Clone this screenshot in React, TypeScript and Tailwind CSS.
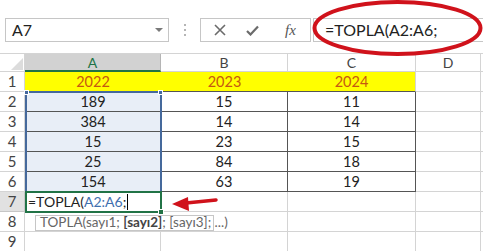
import React from "react";

const W = [25, 136, 127, 128, 65, 2];

function Cell({
  w,
  className = "",
  children,
}: {
  w: number;
  className?: string;
  children?: React.ReactNode;
}) {
  return (
    <div
      className={`h-full flex items-center justify-center shrink-0 ${className}`}
      style={{ width: w }}
    >
      {children}
    </div>
  );
}

const data = [
  ["189", "15", "11"],
  ["384", "14", "14"],
  ["15", "23", "15"],
  ["25", "84", "18"],
  ["154", "63", "19"],
];

export default function App() {
  return (
    <div
      className="relative w-[483px] h-[251px] overflow-hidden bg-white text-[#222]"
      style={{ fontFamily: "Lato, 'Liberation Sans', sans-serif" }}
    >
      {/* formula bar area */}
      <div className="h-[53px] flex items-start pt-[18px]">
        <div className="ml-[5px] w-[164px] h-[24px] border border-[#c6c6c6] flex items-center justify-between pl-[6px] pr-[5px]">
          <span className="text-[16px] text-[#222] leading-none">A7</span>
          <svg width="8" height="5" viewBox="0 0 8 5">
            <path d="M0 0 L8 0 L4 4 Z" fill="#7a7a7a" />
          </svg>
        </div>
        <div className="w-[31px] h-[24px] flex flex-col items-center justify-center gap-[3px]">
          <div className="w-[2px] h-[2px] bg-[#b5b5b5]" />
          <div className="w-[2px] h-[2px] bg-[#b5b5b5]" />
          <div className="w-[2px] h-[2px] bg-[#b5b5b5]" />
        </div>
        <div className="w-[111px] h-[24px] border border-[#c6c6c6] flex items-center">
          <div className="w-[38px] flex justify-center">
            <svg width="12" height="12" viewBox="0 0 12 12">
              <path d="M1 1 L11 11 M11 1 L1 11" stroke="#6b6b6b" strokeWidth="1.6" />
            </svg>
          </div>
          <div className="w-[26px] flex justify-center">
            <svg width="13" height="11" viewBox="0 0 13 11">
              <path d="M1 6 L4.5 9.5 L12 1.5" stroke="#6b6b6b" strokeWidth="2.2" fill="none" />
            </svg>
          </div>
          <div
            className="flex-1 flex justify-center text-[15px] italic text-[#555] pl-[6px]"
            style={{ fontFamily: "'Liberation Serif', serif" }}
          >
            fx
          </div>
        </div>
        <div className="ml-[2px] flex-1 h-[24px] border-y border-l border-[#c6c6c6] flex items-center pl-[11px]">
          <span className="text-[16px] leading-none text-[#222]">=TOPLA(A2:A6;</span>
        </div>
      </div>

      {/* header row */}
      <div className="flex h-[19px] border-t border-[#d4d4d4]">
        <Cell w={W[0]} className="border-r border-b border-[#d4d4d4] relative">
          <svg className="absolute left-[11px] top-[4px]" width="12" height="12" viewBox="0 0 12 12">
            <path d="M12 0 L12 12 L0 12 Z" fill="#dcdcdc" />
          </svg>
        </Cell>
        <Cell w={W[1]} className="bg-[#d2d2d2] border-r border-[#b5b5b5] border-b-2 border-b-[#217346] text-[#217346] text-[14px]">
          A
        </Cell>
        <Cell w={W[2]} className="border-r border-b border-[#d4d4d4] text-[#444] text-[14px]">B</Cell>
        <Cell w={W[3]} className="border-r border-b border-[#d4d4d4] text-[#444] text-[14px]">C</Cell>
        <Cell w={W[4]} className="border-r border-b border-[#d4d4d4] text-[#444] text-[14px]">D</Cell>
        <Cell w={W[5]} className="border-b border-[#d4d4d4]" />
      </div>

      {/* row 1 */}
      <div className="flex h-[20px] text-[14.5px]">
        <Cell w={W[0]} className="border-r border-b border-[#d4d4d4] text-[#444] text-[15px]">1</Cell>
        <Cell w={W[1]} className="bg-[#ffff00] border-b border-[#4d5a3a] text-[#c65911]">2022</Cell>
        <Cell w={W[2]} className="bg-[#ffff00] border-b border-[#555] text-[#c65911]">2023</Cell>
        <Cell w={W[3]} className="bg-[#ffff00] border-r border-r-[#d4d4d4] border-b border-b-[#555] text-[#c65911]">2024</Cell>
        <Cell w={W[4]} className="border-r border-b border-[#d4d4d4]" />
        <Cell w={W[5]} className="border-b border-[#d4d4d4]" />
      </div>

      {/* rows 2-6 */}
      {data.map((r, i) => (
        <div key={i} className="flex h-[20px] text-[14.5px]">
          <Cell w={W[0]} className="border-r border-b border-[#d4d4d4] text-[#444] text-[15px]">{i + 2}</Cell>
          <Cell w={W[1]} className="bg-[#e8eef7] border-b border-[#555]">{r[0]}</Cell>
          <Cell w={W[2]} className="border-r border-b border-[#555]">{r[1]}</Cell>
          <Cell w={W[3]} className="border-r border-b border-[#555]">{r[2]}</Cell>
          <Cell w={W[4]} className="border-r border-b border-[#d4d4d4]" />
          <Cell w={W[5]} className="border-b border-[#d4d4d4]" />
        </div>
      ))}

      {/* row 7 */}
      <div className="flex h-[20px] text-[15px]">
        <Cell w={W[0]} className="bg-[#e1e1e1] border-r border-b border-[#c6c6c6] text-[#444]">7</Cell>
        <Cell w={W[1]} className="justify-start pl-[3px] border-r border-b border-[#d4d4d4]">
          <span className="leading-none text-[14px]">
            =TOPLA(<span className="text-[#3f6fae]">A2:A6</span>;
          </span>
          <span className="inline-block w-[1px] h-[16px] bg-black ml-[1px]" />
        </Cell>
        <Cell w={W[2]} className="border-r border-b border-[#d4d4d4]" />
        <Cell w={W[3]} className="border-r border-b border-[#d4d4d4]" />
        <Cell w={W[4]} className="border-r border-b border-[#d4d4d4]" />
        <Cell w={W[5]} className="border-b border-[#d4d4d4]" />
      </div>

      {/* rows 8-9 */}
      {[8, 9].map((n) => (
        <div key={n} className="flex h-[20px] text-[15px]">
          <Cell w={W[0]} className="border-r border-b border-[#d4d4d4] text-[#444]">{n}</Cell>
          <Cell w={W[1]} className="border-r border-b border-[#d4d4d4]" />
          <Cell w={W[2]} className="border-r border-b border-[#d4d4d4]" />
          <Cell w={W[3]} className="border-r border-b border-[#d4d4d4]" />
          <Cell w={W[4]} className="border-r border-b border-[#d4d4d4]" />
          <Cell w={W[5]} className="border-b border-[#d4d4d4]" />
        </div>
      ))}

      {/* blue reference range A2:A6 */}
      <div className="absolute left-[25px] top-[91px] w-[137px] h-[102px] border-2 border-[#45699c] pointer-events-none" />
      <div className="absolute left-[24px] top-[90px] w-[5px] h-[5px] bg-[#45699c] border border-white" />
      <div className="absolute left-[158px] top-[90px] w-[5px] h-[5px] bg-[#45699c] border border-white" />

      {/* active cell A7 */}
      <div className="absolute left-[25px] top-[191px] w-[137px] h-[22px] border-2 border-[#217346] pointer-events-none" />
      <div className="absolute left-[158px] top-[209px] w-[6px] h-[6px] bg-[#217346] border border-white" />

      {/* tooltip */}
      <div className="absolute left-[35px] top-[215px] w-[179px] h-[16px] bg-white border border-[#c6c6c6] flex items-center pl-[4px] text-[13.5px] text-[#666] leading-none whitespace-nowrap">
        TOPLA(sayı1;&nbsp;<b className="text-[#444]">[sayı2]</b>; [sayı3]; ...)
      </div>

      {/* red annotations */}
      <svg className="absolute left-0 top-0 pointer-events-none" width="483" height="251" viewBox="0 0 483 251">
        <ellipse cx="397.5" cy="28" rx="83" ry="26" fill="none" stroke="#d0121b" strokeWidth="4" />
        <path d="M216 200 L186 203" stroke="#d0121b" strokeWidth="3.5" strokeLinecap="round" />
        <path d="M172 204 L188 197 L189 211 Z" fill="#d0121b" />
      </svg>
    </div>
  );
}
